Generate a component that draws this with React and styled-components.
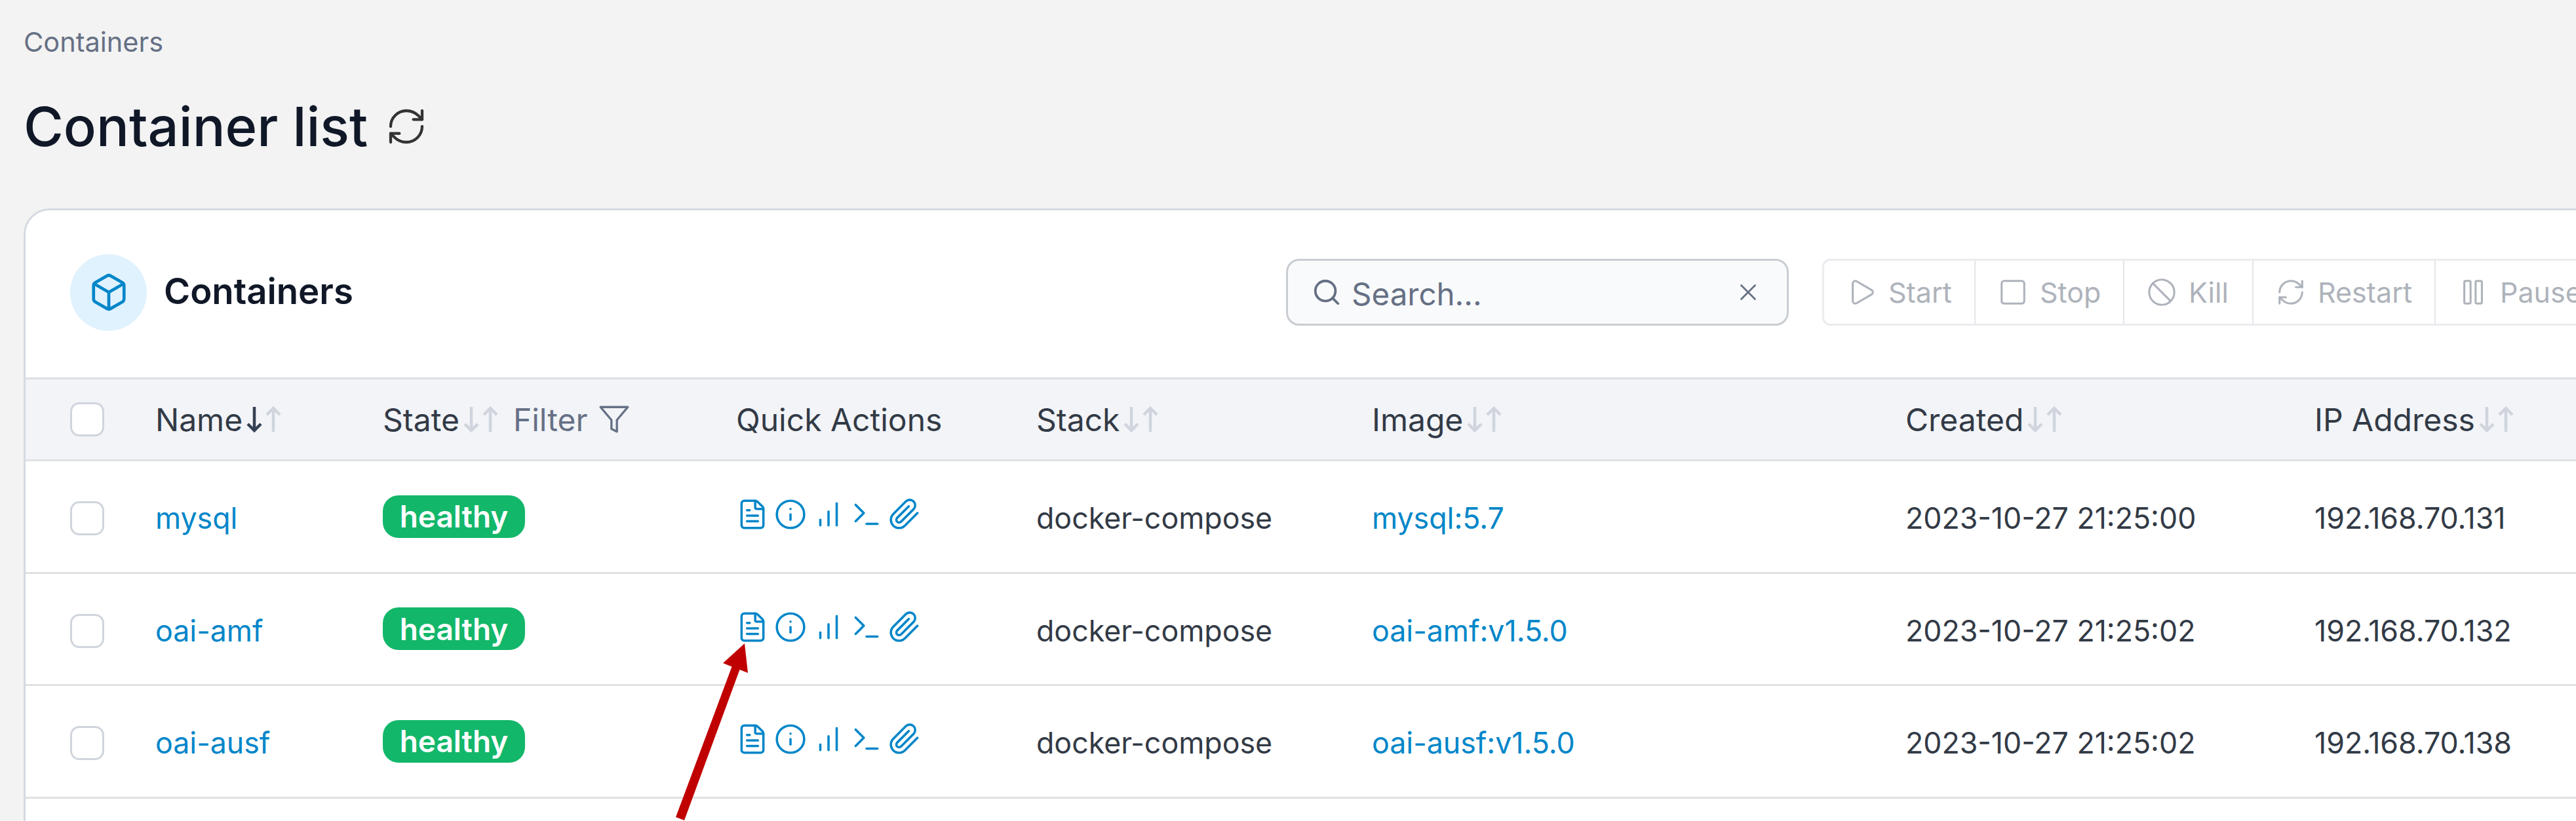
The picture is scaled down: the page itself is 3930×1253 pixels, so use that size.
import React from 'react'
import styled, { createGlobalStyle } from 'styled-components'
import { Ban, Box, FileText, Info, Pause, Play, RefreshCw, Search, Square, Terminal, X } from 'lucide-react'
import { FiBarChart, FiFilter, FiPaperclip } from 'react-icons/fi'

const linkBlue = '#0086c9'
const columns = '130px 347px 539px 458px 512px 814px 624px 1fr'

const GlobalStyle = createGlobalStyle`
  html, body {
    margin: 0;
    height: 100%;
    overflow: hidden;
    background: #f3f3f3;
    font-family: Inter, "Noto Sans", sans-serif;
  }
`

const Page = styled.div`
  position: relative;
  width: 3930px;
  height: 1253px;
  overflow: hidden;
  padding: 38px 0 0 36px;
  box-sizing: border-box;
`

const Breadcrumb = styled.div`
  font-size: 41.5px;
  line-height: 52px;
  color: #667085;
`

const TitleRow = styled.div`
  display: flex;
  align-items: center;
  gap: 27px;
  margin-top: 67px;
  height: 72px;
  color: #333;
`

const Title = styled.h1`
  margin: 0;
  font-size: 83px;
  line-height: 72px;
  font-weight: 500;
  color: #101828;
`

const Card = styled.section`
  width: 4200px;
  min-height: 1100px;
  margin-top: 89px;
  background: #fff;
  border: 3px solid #d5dae1;
  border-radius: 40px 0 0 0;
  box-sizing: border-box;
`

const CardHeader = styled.div`
  display: flex;
  align-items: center;
  height: 255px;
  padding: 0 0 5px 68px;
  box-sizing: border-box;
`

const CardTitleBlock = styled.div`
  display: flex;
  align-items: center;
  gap: 26px;
  flex: 0 0 1855px;
`

const IconCircle = styled.div`
  display: flex;
  align-items: center;
  justify-content: center;
  width: 117px;
  height: 117px;
  border-radius: 50%;
  background: #e0f2fe;
  color: ${linkBlue};
`

const CardTitle = styled.h2`
  margin: 0 0 4px;
  font-size: 54.5px;
  font-weight: 600;
  color: #101828;
`

const SearchBox = styled.div`
  display: flex;
  align-items: center;
  flex: 0 0 767px;
  height: 102px;
  padding: 0 38px 0 36px;
  box-sizing: border-box;
  background: #f9fafb;
  border: 3px solid #c9cdd2;
  border-radius: 20px;
  color: #667085;
  font-size: 47.5px;
`

const SearchText = styled.span`
  flex: 1;
  margin: 4px 0 0 15px;
`

const ActionGroup = styled.div`
  display: flex;
  height: 102px;
  margin-left: 51px;
  background: #fff;
  border: 3px solid #eaecef;
  border-radius: 12px 0 0 12px;
  box-sizing: border-box;
`

const ActionButton = styled.div`
  display: flex;
  align-items: center;
  gap: 18px;
  width: ${p => p.$width}px;
  padding-left: 34px;
  box-sizing: border-box;
  border-right: 2px solid #e3e5e8;
  color: #aeb3bb;
  font-size: 43px;
`

const Row = styled.div`
  display: grid;
  grid-template-columns: ${columns};
  align-items: center;
  padding: 6px 0 0 68px;
  height: 171.5px;
  box-sizing: border-box;
  border-bottom: 3px solid #dfe1e4;
  font-size: 44.7px;
  color: #323a46;
`

const HeadRow = styled(Row)`
  height: 128px;
  padding-top: 0;
  background: #f2f4f7;
  border-top: 3px solid #dcdfe3;
  font-size: 48px;
`

const Checkbox = styled.span`
  display: block;
  width: 52px;
  height: 52px;
  box-sizing: border-box;
  background: #fff;
  border: 3px solid #d0d5dd;
  border-radius: 14px;
`

const HeadCell = styled.div`
  display: flex;
  align-items: center;
  white-space: nowrap;
`

const SortArrows = styled.span`
  display: inline-flex;
  gap: 3px;
  margin-left: 5px;
`

const FilterLabel = styled.span`
  display: inline-flex;
  align-items: center;
  gap: 16px;
  margin-left: 22px;
  color: #667085;
`

const LinkText = styled.a`
  color: ${linkBlue};
  text-decoration: none;
`

const BadgeCell = styled.div`
  display: flex;
  margin-top: -6px;
`

const Badge = styled.span`
  display: inline-flex;
  align-items: center;
  justify-content: center;
  width: 217px;
  height: 65px;
  border-radius: 24px;
  background: #12b76a;
  color: #fff;
  font-size: 46px;
  font-weight: 600;
`

const QuickActions = styled.div`
  display: flex;
  gap: 8px;
  margin-top: -12px;
  color: ${linkBlue};
`

const Pointer = styled.svg`
  position: absolute;
  left: 1020px;
  top: 975px;
`

const SortArrow = ({ up, color }) => (
  <svg width="26" height="42" viewBox="0 0 26 42" fill="none" stroke={color} strokeWidth="4.5">
    {up ? <path d="M13 40V4M3 14L13 4l10 10" /> : <path d="M13 2v36M3 28l10 10 10-10" />}
  </svg>
)

const Sort = ({ active }) => (
  <SortArrows>
    <SortArrow color={active ? '#344054' : '#d0d5dd'} />
    <SortArrow up color="#d0d5dd" />
  </SortArrows>
)

const actions = [
  { label: 'Start', Icon: Play, width: 231 },
  { label: 'Stop', Icon: Square, width: 227 },
  { label: 'Kill', Icon: Ban, width: 197 },
  { label: 'Restart', Icon: RefreshCw, width: 278 },
  { label: 'Pause', Icon: Pause, width: 260 },
]

const containers = [
  { name: 'mysql', image: 'mysql:5.7', created: '2023-10-27 21:25:00', ip: '192.168.70.131' },
  { name: 'oai-amf', image: 'oai-amf:v1.5.0', created: '2023-10-27 21:25:02', ip: '192.168.70.132' },
  { name: 'oai-ausf', image: 'oai-ausf:v1.5.0', created: '2023-10-27 21:25:02', ip: '192.168.70.138' },
]

export default function App() {
  return (
    <Page>
      <GlobalStyle />
      <Breadcrumb>Containers</Breadcrumb>
      <TitleRow>
        <Title>Container list</Title>
        <RefreshCw size={64} strokeWidth={1.6} />
      </TitleRow>
      <Card>
        <CardHeader>
          <CardTitleBlock>
            <IconCircle><Box size={62} strokeWidth={1.8} /></IconCircle>
            <CardTitle>Containers</CardTitle>
          </CardTitleBlock>
          <SearchBox>
            <Search size={46} strokeWidth={2} />
            <SearchText>Search...</SearchText>
            <X size={42} strokeWidth={1.6} />
          </SearchBox>
          <ActionGroup>
            {actions.map(({ label, Icon, width }) => (
              <ActionButton key={label} $width={width}>
                <Icon size={46} strokeWidth={1.6} />
                {label}
              </ActionButton>
            ))}
          </ActionGroup>
        </CardHeader>
        <HeadRow>
          <Checkbox />
          <HeadCell>Name<Sort active /></HeadCell>
          <HeadCell>
            State<Sort />
            <FilterLabel>Filter <FiFilter size={50} strokeWidth={1.6} /></FilterLabel>
          </HeadCell>
          <HeadCell>Quick Actions</HeadCell>
          <HeadCell>Stack<Sort /></HeadCell>
          <HeadCell>Image<Sort /></HeadCell>
          <HeadCell>Created<Sort /></HeadCell>
          <HeadCell>IP Address<Sort /></HeadCell>
        </HeadRow>
        {containers.map(c => (
          <Row key={c.name}>
            <Checkbox />
            <LinkText>{c.name}</LinkText>
            <BadgeCell><Badge>healthy</Badge></BadgeCell>
            <QuickActions>
              <FileText size={50} strokeWidth={1.7} />
              <Info size={50} strokeWidth={1.7} />
              <FiBarChart size={50} strokeWidth={1.7} />
              <Terminal size={50} strokeWidth={1.7} />
              <FiPaperclip size={50} strokeWidth={1.7} />
            </QuickActions>
            <div>docker-compose</div>
            <LinkText>{c.image}</LinkText>
            <div>{c.created}</div>
            <div>{c.ip}</div>
          </Row>
        ))}
      </Card>
      <Pointer width="130" height="278" viewBox="1020 975 130 278">
        <path d="M1136 982L1103 1012L1116.5 1017.5L1031 1247L1044 1252L1128.5 1022L1141 1027Z" fill="#c00000" />
      </Pointer>
    </Page>
  )
}
